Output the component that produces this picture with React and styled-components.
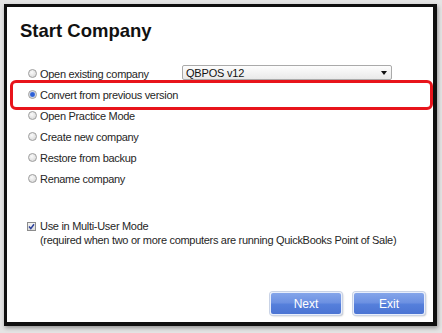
import React from 'react';
import styled, { createGlobalStyle } from 'styled-components';

const GlobalStyle = createGlobalStyle`
  html, body {
    margin: 0;
    padding: 0;
    background: #e4e4e4;
  }
  body {
    width: 442px;
    height: 333px;
    overflow: hidden;
    font-family: "Liberation Sans", Arial, sans-serif;
  }
`;

const options = [
  'Open existing company',
  'Convert from previous version',
  'Open Practice Mode',
  'Create new company',
  'Restore from backup',
  'Rename company',
];

function App() {
  return (
    <>
      <GlobalStyle />
      <Dialog>
        <Title>Start Company</Title>
        <OptionList>
          {options.map((label, i) => (
            <OptionRow key={label} highlight={i === 1}>
              <Radio checked={i === 1} />
              <OptionLabel wide={i === 0}>{label}</OptionLabel>
              {i === 0 && (
                <Select>
                  <span>QBPOS v12</span>
                  <Caret />
                </Select>
              )}
            </OptionRow>
          ))}
        </OptionList>
        <MultiUser>
          <CheckBox>
            <svg width="7" height="7" viewBox="0 0 7 7">
              <path d="M1 3.6 L2.8 5.6 L6 1.2" fill="none" stroke="#2a3f9a" strokeWidth="1.5" />
            </svg>
          </CheckBox>
          <MultiText>
            <div>Use in Multi-User Mode</div>
            <div>(required when two or more computers are running QuickBooks Point of Sale)</div>
          </MultiText>
        </MultiUser>
        <Footer>
          <Button>Next</Button>
          <Button>Exit</Button>
        </Footer>
      </Dialog>
    </>
  );
}

const Dialog = styled.div`
  box-sizing: border-box;
  width: 433px;
  height: 322px;
  margin: 4px 0 0 4px;
  background: #fff;
  border: 3px solid #101010;
  border-right-width: 4px;
  border-bottom-width: 4px;
  box-shadow: 1px 2px 4px rgba(0, 0, 0, 0.35);
  display: flex;
  flex-direction: column;
`;

const Title = styled.h1`
  margin: 13px 0 0 13px;
  font-size: 18.5px;
  line-height: 22px;
  font-weight: bold;
  color: #111;
`;

const OptionList = styled.div`
  display: flex;
  flex-direction: column;
  margin-top: 21px;
`;

const OptionRow = styled.div`
  position: relative;
  display: flex;
  align-items: center;
  height: 21px;
  padding-left: 21px;
  font-size: 11px;
  letter-spacing: -0.3px;
  color: #262626;

  ${p => p.highlight && `
    &::after {
      content: '';
      position: absolute;
      left: 3px;
      right: 0;
      top: -4px;
      bottom: -5px;
      border: 3px solid #e8141b;
      border-radius: 6px;
    }
  `}
`;

const Radio = styled.span`
  box-sizing: border-box;
  width: 9px;
  height: 9px;
  border-radius: 50%;
  border: 1px solid #9d9d9d;
  background: ${p => p.checked
    ? 'radial-gradient(circle, #2d5fd6 0 1.8px, #8aa6e6 2.6px, #e9e9e9 3.2px)'
    : 'radial-gradient(circle at 40% 35%, #fafafa, #d2d2d2)'};
  margin-right: 3px;
  flex: none;
`;

const OptionLabel = styled.span`
  width: ${p => (p.wide ? '142px' : 'auto')};
  white-space: nowrap;
`;

const Select = styled.div`
  box-sizing: border-box;
  width: 210px;
  height: 15px;
  border: 1px solid #aaa;
  border-radius: 2px;
  background: linear-gradient(#fdfdfd, #e9e9e9);
  display: flex;
  align-items: center;
  justify-content: space-between;
  padding: 0 4px 0 3px;
  font-size: 11px;
  letter-spacing: -0.2px;
  color: #111;
  margin-top: -2px;
`;

const Caret = styled.span`
  width: 0;
  height: 0;
  border-left: 3px solid transparent;
  border-right: 3px solid transparent;
  border-top: 4px solid #111;
`;

const MultiUser = styled.div`
  display: flex;
  align-items: flex-start;
  margin-top: 30px;
  padding-left: 20px;
`;

const CheckBox = styled.span`
  box-sizing: border-box;
  width: 9px;
  height: 9px;
  margin-top: 3px;
  margin-right: 4px;
  border: 1px solid #8c8c8c;
  background: linear-gradient(#f4f4f4, #dcdcdc);
  display: flex;
  align-items: center;
  justify-content: center;
  flex: none;
`;

const MultiText = styled.div`
  font-size: 11px;
  line-height: 14px;
  letter-spacing: -0.3px;
  color: #262626;
`;

const Footer = styled.div`
  margin-top: auto;
  margin-bottom: 7px;
  display: flex;
  justify-content: flex-end;
  gap: 11px;
  padding-right: 8px;
`;

const Button = styled.button`
  box-sizing: border-box;
  width: 72px;
  height: 23px;
  border: 1px solid #e8eefb;
  border-radius: 3px;
  background: linear-gradient(#84a5ea 0%, #6d91e2 45%, #557fdb 55%, #4b74d3 100%);
  box-shadow: 0 0 0 1px #c9d3e6, 1px 1px 2px rgba(0, 0, 0, 0.3);
  color: #fff;
  font-family: "Liberation Sans", Arial, sans-serif;
  font-size: 12px;
  padding: 0;
`;

export default App;
